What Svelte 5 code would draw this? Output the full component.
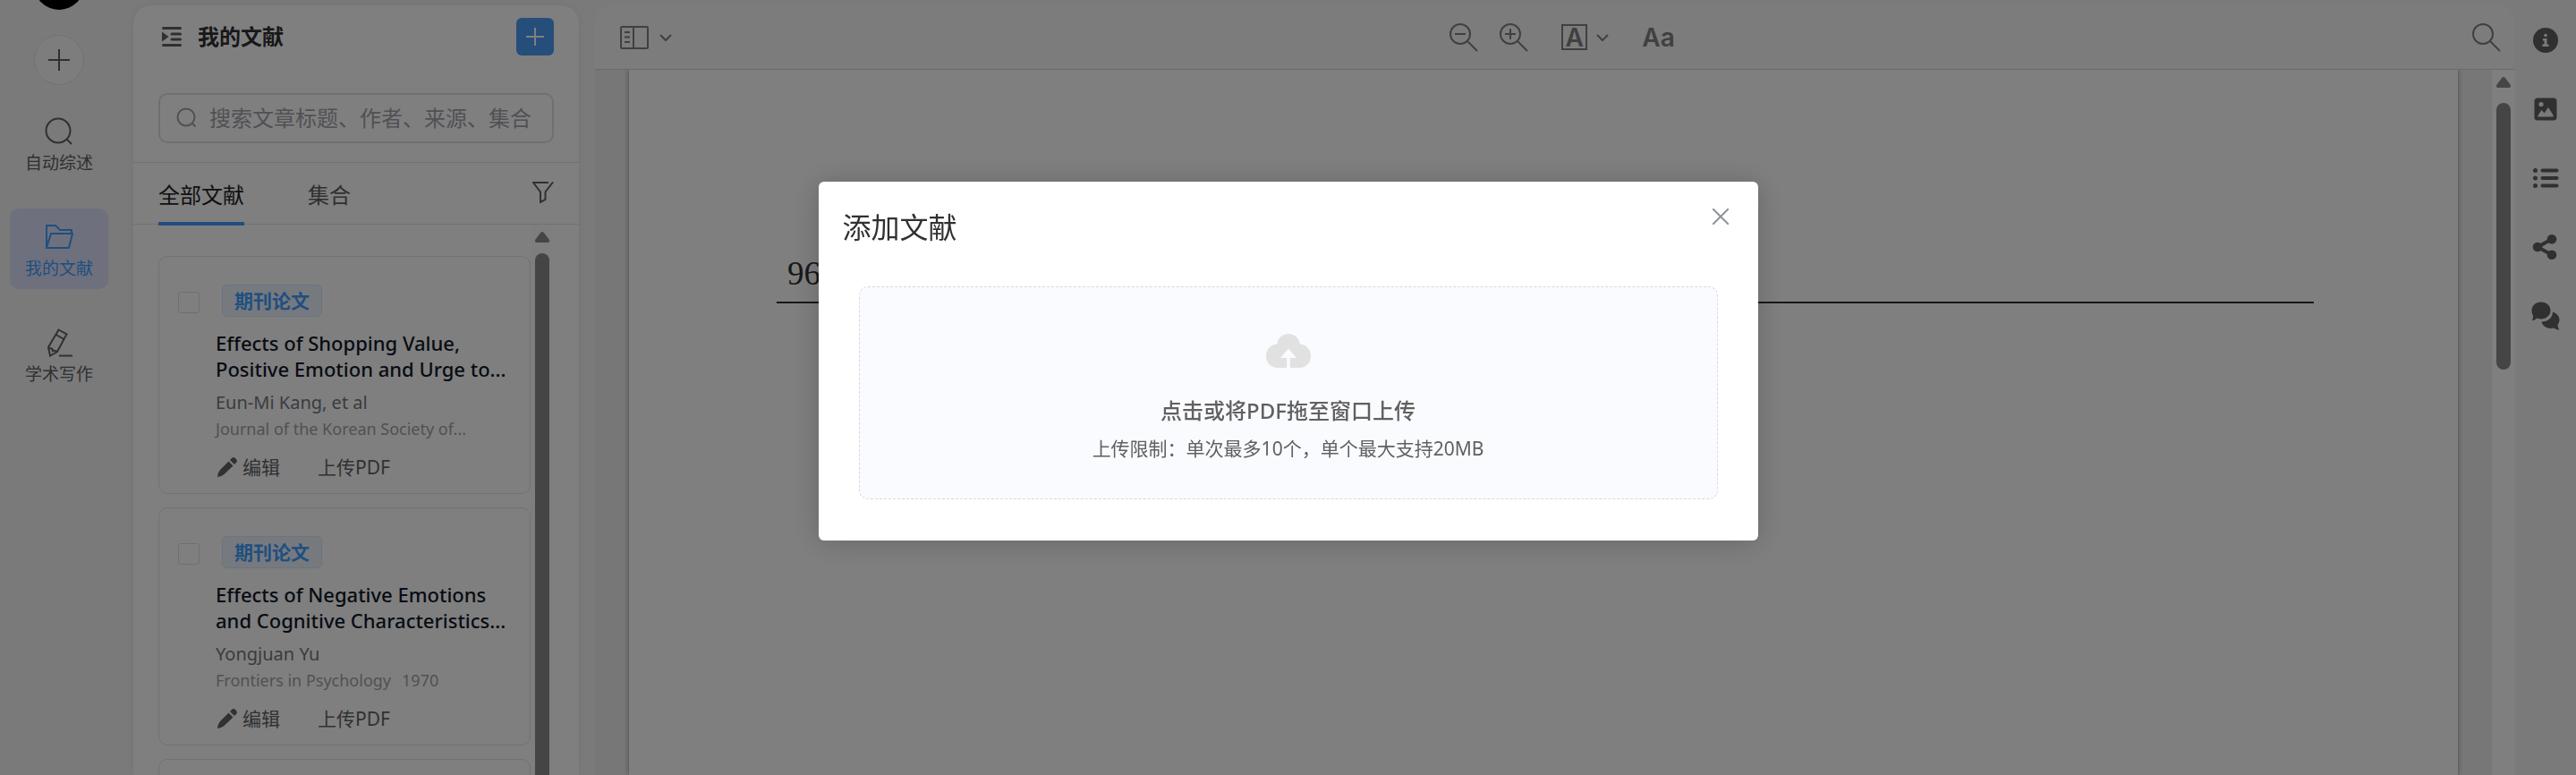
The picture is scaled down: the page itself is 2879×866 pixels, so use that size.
<script lang="ts">
	type Paper = {
		title: string;
		authors: string;
		source: string;
		year?: string;
	};

	const nav = [
		{ id: 'review', label: '自动综述' },
		{ id: 'library', label: '我的文献' },
		{ id: 'writing', label: '学术写作' }
	];

	const papers: Paper[] = [
		{
			title: 'Effects of Shopping Value, Positive Emotion and Urge to...',
			authors: 'Eun-Mi Kang, et al',
			source: 'Journal of the Korean Society of...'
		},
		{
			title: 'Effects of Negative Emotions and Cognitive Characteristics...',
			authors: 'Yongjuan Yu',
			source: 'Frontiers in Psychology',
			year: '1970'
		}
	];

	let current = $state('library');
	let tab = $state('all');
	let query = $state('');
	let open = $state(true);
</script>

{#snippet chevron()}
	<svg class="chevron" width="16" height="10" viewBox="0 0 16 10"><path d="M2 2l6 6 6-6" /></svg>
{/snippet}

{#snippet arrow()}
	<svg class="arrow" width="16" height="12" viewBox="0 0 16 12">
		<path d="M6 1.200Q8-1 10 1.200l5.500 7.300Q17 12 14 12H2Q-1 12 .5 8.500z" />
	</svg>
{/snippet}

<div class="app">
	<aside class="rail">
		<div class="avatar"></div>
		<button class="new" aria-label="新建">
			<svg width="24" height="24" viewBox="0 0 24 24"><path d="M12 0v24M0 12h24" /></svg>
		</button>
		<nav>
			{#each nav as item (item.id)}
				<a
					href="#{item.id}"
					class="nav-item"
					class:active={current === item.id}
					onclick={() => (current = item.id)}
				>
					<svg width="32" height="32" viewBox="0 0 32 32">
						{#if item.id === 'review'}
							<circle cx="15" cy="15" r="13.500" /><path d="M24.500 24.500l5.500 5.500" />
						{:else if item.id === 'library'}
							<path d="M2 28V3h10l5 5h13v5M2 28h25l4-16H7L2 28z" />
						{:else}
							<path d="M15.500 1.500l9 5L14 26l-8 4.500-2-9.500zM12.500 7l9 5M5 22q4 0 4 3 2-1 5 1M16 30.500h15" />
						{/if}
					</svg>
					<span>{item.label}</span>
				</a>
			{/each}
		</nav>
	</aside>

	<section class="library">
		<header class="library-header">
			<svg class="fold" width="22" height="22" viewBox="0 0 22 22">
				<path d="M1.500 1.500h19M11 8h9.500M11 14h9.500M1.500 20.500h19" />
				<path class="solid" d="M0 5.500l7.500 5.500L0 16.500z" />
			</svg>
			<h1>我的文献</h1>
			<button class="add" aria-label="添加文献" onclick={() => (open = true)}>
				<svg width="20" height="20" viewBox="0 0 20 20"><path d="M10 0v20M0 10h20" /></svg>
			</button>
		</header>

		<label class="search">
			<svg width="24" height="24" viewBox="0 0 24 24">
				<circle cx="11" cy="11" r="9.500" /><path d="M17.500 17.500l4 4" />
			</svg>
			<input
				type="text"
				bind:value={query}
				aria-label="搜索"
				placeholder="搜索文章标题、作者、来源、集合"
			/>
		</label>

		<div class="tabs">
			<button class:selected={tab === 'all'} onclick={() => (tab = 'all')}>全部文献</button>
			<button class:selected={tab === 'sets'} onclick={() => (tab = 'sets')}>集合</button>
			<button class="filter" aria-label="筛选">
				<svg width="24" height="24" viewBox="0 0 24 24">
					<path d="M18 1H1l8 10.500V23l5.500-3v-8.500L23 .5" />
				</svg>
			</button>
		</div>

		<div class="list">
			<div class="cards">
				{#each papers as paper (paper.title)}
					<article class="card">
						<div class="card-head">
							<input type="checkbox" aria-label="选择文献" />
							<span class="tag">期刊论文</span>
						</div>
						<div class="card-body">
							<h2>{paper.title}</h2>
							<p class="authors">{paper.authors}</p>
							<p class="source">
								<span>{paper.source}</span>
								{#if paper.year}<span>{paper.year}</span>{/if}
							</p>
							<div class="actions">
								<button>
									<svg width="22" height="22" viewBox="0 0 22 22">
										<path d="M12.500 4.500l5 5L7.500 19q-3 2.500-7.500 3 .5-5 3-8zM14 3l2-2q2-2 4.500.5T21 6l-2 2z" />
									</svg>
									编辑
								</button>
								<button>上传PDF</button>
							</div>
						</div>
					</article>
				{/each}
				<!-- placeholder while the next page loads -->
				<div class="card"></div>
			</div>
			<div class="scrollbar">
				{@render arrow()}
				<div class="thumb"></div>
			</div>
		</div>
	</section>

	<main class="reader">
		<div class="toolbar">
			<div class="tools">
				<button aria-label="侧边栏">
					<svg width="32" height="26" viewBox="0 0 32 26">
						<rect x="1" y="1" width="30" height="24" rx="1" />
						<path d="M15 1v24M5 7h6M5 12.500h6M5 18h6" />
					</svg>
					{@render chevron()}
				</button>
			</div>
			<div class="tools center">
				<button aria-label="缩小">
					<svg width="32" height="32" viewBox="0 0 32 32">
						<circle cx="12" cy="12" r="11" /><path d="M20 20l11 11M6 12h12" />
					</svg>
				</button>
				<button aria-label="放大">
					<svg width="32" height="32" viewBox="0 0 32 32">
						<circle cx="12" cy="12" r="11" /><path d="M20 20l11 11M6 12h12M12 6v12" />
					</svg>
				</button>
				<button class="annotate">
					<span class="boxed">A</span>
					{@render chevron()}
				</button>
				<button class="font">Aa</button>
			</div>
			<div class="tools end">
				<button aria-label="查找">
					<svg width="32" height="32" viewBox="0 0 32 32">
						<circle cx="12" cy="12" r="11" /><path d="M20 20l11 11" />
					</svg>
				</button>
			</div>
		</div>
		<div class="viewport">
			<div class="page">
				<div class="running-head">96</div>
			</div>
			<div class="scrollbar">
				{@render arrow()}
				<div class="thumb"></div>
			</div>
		</div>
	</main>

	<aside class="side-tools">
		<button aria-label="信息">
			<svg width="32" height="32" viewBox="0 0 32 32">
				<circle cx="16" cy="16" r="14" />
				<circle class="cut" cx="16" cy="10.500" r="1.800" />
				<path class="cut" d="M13 14h4.500v6.500h2V23H12.500v-2.500h2V16.500H13z" />
			</svg>
		</button>
		<button aria-label="图片">
			<svg width="32" height="32" viewBox="0 0 32 32">
				<rect x="3.500" y="3.500" width="25" height="25" rx="3.500" />
				<circle class="cut" cx="11" cy="10.500" r="2.600" />
				<path class="cut" d="M7.500 23l4-6 3 3.500L19 14l5.500 8.500v2H7.500z" />
			</svg>
		</button>
		<button aria-label="目录">
			<svg width="32" height="32" viewBox="0 0 32 32">
				<circle cx="4.500" cy="7.500" r="2.500" /><circle cx="4.500" cy="16" r="2.500" />
				<circle cx="4.500" cy="24.500" r="2.500" />
				<rect x="10.500" y="5.500" width="20" height="4" rx="2" />
				<rect x="10.500" y="14" width="20" height="4" rx="2" />
				<rect x="10.500" y="22.500" width="20" height="4" rx="2" />
			</svg>
		</button>
		<button aria-label="分享">
			<svg width="32" height="32" viewBox="0 0 32 32">
				<circle cx="7" cy="16" r="5.300" /><circle cx="23" cy="7.300" r="5.300" />
				<circle cx="23" cy="24.700" r="5.300" />
				<path class="line" d="M23 7.300L7 16l16 8.700" />
			</svg>
		</button>
		<button aria-label="评论">
			<svg width="32" height="32" viewBox="0 0 32 32">
				<path d="M11 .5c6 0 10.500 4 10.500 9.300S17 19.500 11 19.500q-2.500 0-4.500-1Q4 21 .5 21q2-2.500 1.500-5-1.500-2.500-1.500-6C.5 4.500 5 .5 11 .5z" />
				<path d="M24 11.500c4.500 1.500 7.500 5 7.500 9q0 3-2 5.500 0 3 2 5.500-3.500 0-6.500-2-7 1.500-11.500-3-1.500-1.500-2-4c7 0 12.500-4.500 12.500-11z" />
			</svg>
		</button>
	</aside>
</div>

{#if open}
	<div class="overlay">
		<div class="dialog" role="dialog" aria-modal="true" aria-labelledby="dialog-title">
			<header class="dialog-header">
				<h2 id="dialog-title">添加文献</h2>
				<button aria-label="关闭" onclick={() => (open = false)}>
					<svg width="18" height="18" viewBox="0 0 18 18"><path d="M0 0l18 18M18 0L0 18" /></svg>
				</button>
			</header>
			<button class="dropzone">
				<svg width="50" height="38" viewBox="0 0 50 38">
					<path d="M25 0c7 0 12 5 12.800 11.500C45 12 50 17.500 50 25s-5.500 13-13 13H26.800V27H34L25 16.500 16 27h7.200v11H13C5.500 38 0 32.500 0 25s5-13 12.200-13.500C13 5 18 0 25 0z" />
				</svg>
				<span class="primary">点击或将PDF拖至窗口上传</span>
				<span class="hint">上传限制：单次最多10个，单个最大支持20MB</span>
			</button>
		</div>
	</div>
{/if}

<style>
	:global(body) {
		margin: 0;
		overflow: hidden;
	}

	.app,
	.overlay {
		font-family: 'Noto Sans', 'Noto Sans CJK SC', sans-serif;
	}

	.app {
		display: flex;
		height: 100vh;
		overflow: hidden;
		background: #f5f5f5;
		color: #303133;
	}

	button {
		display: flex;
		align-items: center;
		justify-content: center;
		padding: 0;
		border: 0;
		background: none;
		color: inherit;
		font: inherit;
		cursor: pointer;
	}

	h1,
	h2,
	p {
		margin: 0;
	}

	svg {
		flex: none;
		fill: none;
		stroke: currentColor;
		stroke-width: 2;
	}

	.rail {
		flex: none;
		display: flex;
		flex-direction: column;
		align-items: center;
		width: 132px;
		margin-right: 17px;
	}

	.avatar {
		flex: none;
		width: 56px;
		height: 56px;
		margin-top: -45px;
		border-radius: 50%;
		background: #000;
	}

	.new {
		flex: none;
		width: 56px;
		height: 56px;
		margin: 28px 0 20px;
		border: 1px solid #e4e4e4;
		border-radius: 50%;
		background: #fafafa;
		color: #606060;
	}

	nav {
		display: flex;
		flex-direction: column;
		gap: 28px;
	}

	.nav-item {
		display: flex;
		flex-direction: column;
		align-items: center;
		gap: 5px;
		width: 110px;
		height: 74px;
		padding-top: 16px;
		border-radius: 10px;
		color: #606060;
		font-size: 19px;
		line-height: 28px;
		text-decoration: none;
	}

	.nav-item.active {
		background: #dfe1fa;
		color: #409eff;
	}

	.library {
		flex: none;
		display: flex;
		flex-direction: column;
		box-sizing: border-box;
		width: 498px;
		margin-top: 6px;
		border-radius: 20px 20px 0 0;
		background: #fff;
		box-shadow: 0 0 12px rgba(0, 0, 0, 0.06);
	}

	.library-header {
		display: flex;
		align-items: center;
		gap: 18px;
		padding: 14px 28px 42px 32px;
	}

	.library-header h1 {
		flex: 1;
		font-size: 24px;
		line-height: 36px;
	}

	.fold {
		color: #606060;
		stroke-width: 3;
		stroke-linecap: round;
	}

	.fold .solid {
		fill: currentColor;
		stroke: none;
	}

	.add {
		width: 42px;
		height: 42px;
		border-radius: 6px;
		background: #4a9cf5;
		color: #fff;
	}

	.search {
		display: flex;
		align-items: center;
		gap: 13px;
		height: 52px;
		margin: 0 28px 21px;
		padding: 0 16px 0 18px;
		border: 2px solid #dcdfe6;
		border-radius: 10px;
		color: #a0a3aa;
	}

	.search input {
		flex: 1;
		min-width: 0;
		padding: 0;
		border: 0;
		outline: 0;
		background: none;
		font: inherit;
		font-size: 24px;
		line-height: 36px;
	}

	.search input::placeholder {
		color: #a0a3aa;
		opacity: 1;
	}

	.tabs {
		display: flex;
		gap: 71px;
		height: 68px;
		padding: 0 28px;
		border: solid #e4e4e4;
		border-width: 1px 0;
		font-size: 24px;
		line-height: 36px;
	}

	.tabs button {
		height: 70px;
		box-sizing: border-box;
		padding-top: 2px;
		border: solid transparent;
		border-width: 4px 0;
		color: #606060;
	}

	.tabs .selected {
		border-bottom-color: #409eff;
		color: #222;
	}

	.tabs .filter {
		height: 64px;
		margin-left: auto;
	}

	.list {
		flex: 1;
		display: flex;
		min-height: 0;
		padding: 0 28px;
		overflow: hidden;
	}

	.cards {
		flex: 1;
		display: flex;
		flex-direction: column;
		gap: 15px;
		padding-top: 35px;
	}

	.card {
		flex: none;
		box-sizing: border-box;
		height: 266px;
		padding: 31px 20px 0 21px;
		border: 1px solid #e4e4e4;
		border-radius: 10px;
	}

	.card-head {
		display: flex;
		align-items: center;
		gap: 25px;
		margin-bottom: 15px;
	}

	.card-head input {
		appearance: none;
		width: 24px;
		height: 24px;
		margin: 4px 0 0;
		border: 1px solid #dcdfe6;
		border-radius: 3px;
	}

	.tag {
		padding: 2px 13px;
		border: 1px solid #d4e6fa;
		border-radius: 6px;
		background: #edf4fe;
		color: #409eff;
		font-size: 21px;
		font-weight: 700;
		line-height: 30px;
	}

	.card-body {
		padding-left: 42px;
		font-size: 20px;
	}

	.card-body h2 {
		height: 58px;
		color: #101828;
		font-size: 22px;
		font-weight: 500;
		line-height: 29px;
	}

	.authors {
		height: 30px;
		margin-top: 8px;
		color: #74777f;
		line-height: 30px;
	}

	.source {
		display: flex;
		gap: 12px;
		height: 28px;
		color: #a0a3aa;
		font-size: 18px;
		line-height: 28px;
	}

	.actions {
		display: flex;
		gap: 42px;
		margin-top: 14px;
		padding-left: 2px;
		color: #606266;
		font-size: 21px;
		line-height: 30px;
	}

	.actions button {
		gap: 6px;
	}

	.actions svg {
		fill: currentColor;
		stroke: none;
	}

	.scrollbar {
		flex: none;
		display: flex;
		flex-direction: column;
		align-items: center;
		gap: 12px;
		width: 26px;
		padding-top: 8px;
		background: #fcfcfc;
	}

	.arrow {
		fill: #8b8b8b;
		stroke: none;
	}

	.thumb {
		flex: none;
		width: 16px;
		height: 600px;
		border-radius: 8px;
		background: #8b8b8b;
	}

	.reader {
		flex: 1;
		display: flex;
		flex-direction: column;
		min-width: 0;
		margin: 6px 0 0 18px;
	}

	.toolbar {
		display: grid;
		grid-template-columns: 1fr auto 1fr;
		align-items: center;
		height: 71px;
		padding: 0 16px 0 28px;
		border-bottom: 1px solid #d4d4d4;
		border-radius: 20px 20px 0 0;
		background: #f9f9f9;
		color: #808080;
	}

	.tools {
		display: flex;
		align-items: center;
		gap: 24px;
	}

	.tools button {
		gap: 11px;
	}

	.tools.center {
		padding-left: 4px;
	}

	.tools.end {
		justify-content: flex-end;
	}

	.tools .annotate {
		gap: 9px;
		margin: 0 12px 0 13px;
	}

	.boxed {
		width: 25px;
		height: 25px;
		border: 2px solid;
		font: 600 28px/27px Inter, sans-serif;
	}

	.tools .font {
		font: 600 28px/36px Inter, sans-serif;
	}

	.viewport {
		flex: 1;
		display: flex;
		min-height: 0;
		overflow: hidden;
		background: #efefef;
	}

	.page {
		flex: 1;
		margin: 0 38px;
		background: #fff;
		box-shadow: 0 0 6px rgba(0, 0, 0, 0.4);
	}

	.running-head {
		margin: 202px 161px 0 165px;
		padding: 0 0 6px 12px;
		border-bottom: 2px solid #303133;
		font: 37px/51px 'Liberation Serif', serif;
	}

	.viewport .scrollbar {
		gap: 17px;
		background: #fff;
	}

	.viewport .thumb {
		height: 298px;
	}

	.side-tools {
		flex: none;
		display: flex;
		flex-direction: column;
		align-items: center;
		gap: 45px;
		width: 68px;
		padding-top: 29px;
		color: #606060;
	}

	.side-tools svg {
		fill: currentColor;
		stroke: none;
	}

	.side-tools .cut {
		fill: #f5f5f5;
	}

	.side-tools .line {
		fill: none;
		stroke: currentColor;
		stroke-width: 4;
	}

	.overlay {
		position: fixed;
		inset: 0;
		background: rgba(0, 0, 0, 0.5);
	}

	.dialog {
		box-sizing: border-box;
		width: 1050px;
		margin: 203px auto 0;
		padding: 27px 45px 46px;
		border-radius: 6px;
		background: #fff;
		box-shadow: 0 2px 32px rgba(0, 0, 0, 0.2);
		color: #303133;
	}

	.dialog-header {
		display: flex;
		justify-content: space-between;
		align-items: flex-start;
		margin: 0 -12px 42px -18px;
	}

	.dialog-header h2 {
		font-size: 32px;
		font-weight: 400;
		line-height: 48px;
	}

	.dialog-header button {
		padding: 3px 0;
		color: #909399;
	}

	.dropzone {
		flex-direction: column;
		box-sizing: border-box;
		width: 100%;
		padding: 52px 0 41px;
		border: 1px dashed #d9d9d9;
		border-radius: 10px;
		background: #fafbff;
		color: #606060;
	}

	.dropzone svg {
		margin-bottom: 30px;
		fill: #e1e1e1;
		stroke: none;
	}

	.primary {
		margin-bottom: 9px;
		font-size: 24px;
		font-weight: 500;
		line-height: 36px;
	}

	.hint {
		font-size: 21px;
		line-height: 30px;
	}
</style>
